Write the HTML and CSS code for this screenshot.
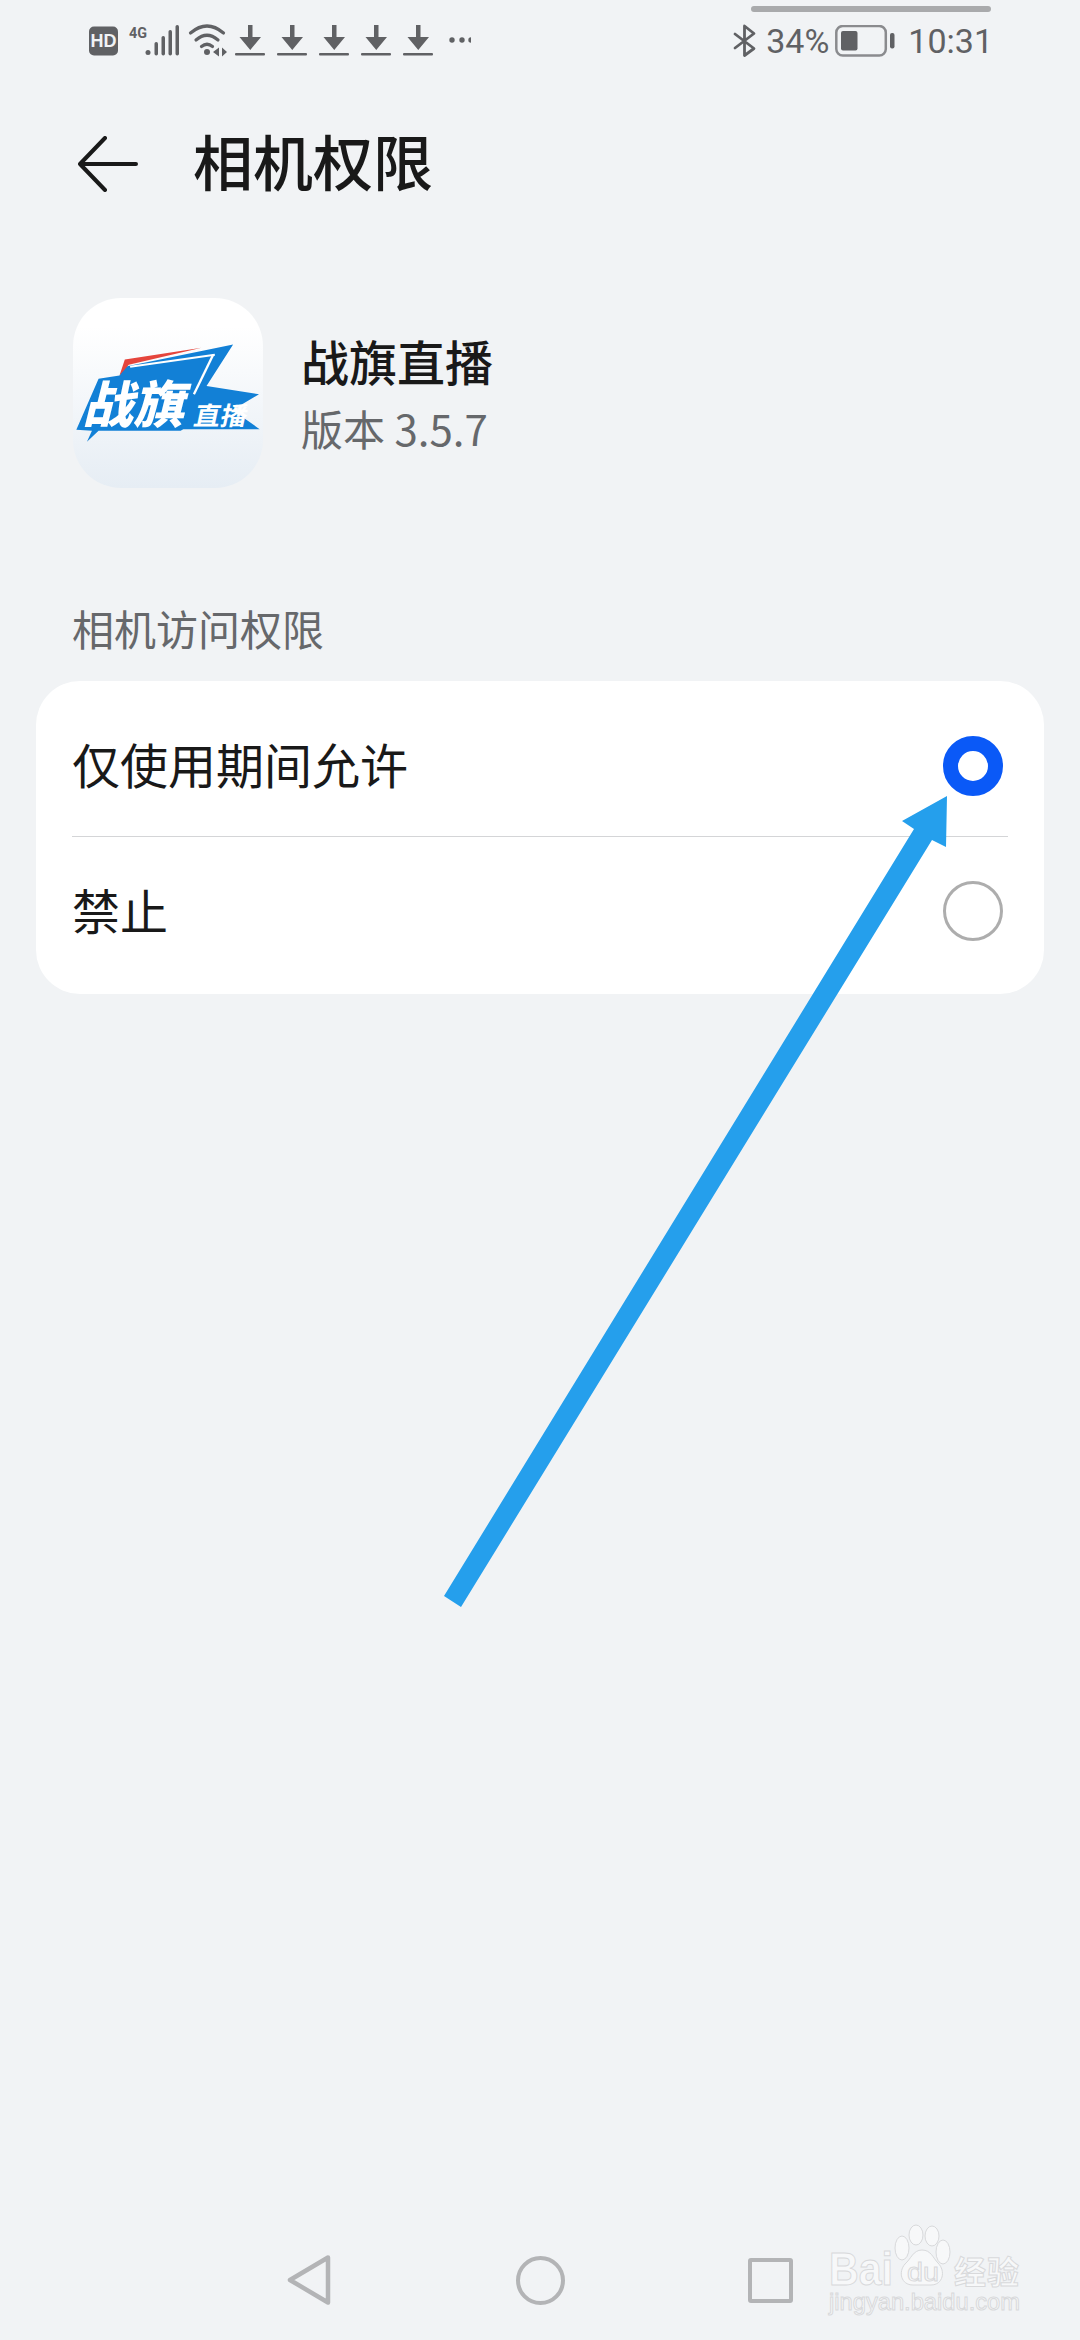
FILE: index.html
```html
<!DOCTYPE html>
<html lang="zh-CN">
<head>
  <meta charset="utf-8" />
  <title>相机权限</title>
  <link rel="stylesheet" href="styles.css">
</head>
<body>
  <div class="page">
    <!-- 状态栏 -->
    <div class="statusbar">
      <svg class="status-left" width="382" height="72" viewBox="89 0 382 72">
        <defs>
          <g id="dl">
            <path d="M248 25h4.500v12h8.500l-10.750 13-10.750-13h8.500z"/>
            <rect x="235" y="53" width="30" height="2.600" rx="1"/>
          </g>
        </defs>
        <g fill="#606164">
          <rect x="89" y="26.500" width="29" height="29" rx="5"/>
          <text class="hd" x="103.500" y="47" text-anchor="middle">HD</text>
          <text class="g4" x="129" y="38" textLength="18" lengthAdjust="spacingAndGlyphs">4G</text>
          <circle cx="148" cy="52.500" r="2.500"/>
          <rect x="154.500" y="42" width="3.500" height="13.500" rx="1.700"/>
          <rect x="161.500" y="36" width="3.500" height="19.500" rx="1.700"/>
          <rect x="168.500" y="30" width="3.500" height="25.500" rx="1.700"/>
          <rect x="175.500" y="25" width="3.500" height="30.500" rx="1.700"/>
          <circle cx="207" cy="52" r="3"/>
          <path d="M213 52l6-4.500v9zM222 47.500l5 4.500-5 4.500z"/>
          <use href="#dl"/>
          <use href="#dl" x="42"/>
          <use href="#dl" x="84"/>
          <use href="#dl" x="126"/>
          <use href="#dl" x="168"/>
          <circle cx="452" cy="40" r="2.700"/>
          <circle cx="462" cy="40" r="2.700"/>
          <circle cx="471" cy="40" r="2.700"/>
        </g>
        <g fill="none" stroke="#606164" stroke-width="3.200" stroke-linecap="round">
          <path d="M190.500 33q16.500-14 33 0"/>
          <path d="M196 40q11-9.500 22 0"/>
          <path d="M201.500 46.500q5.500-4.500 11 0"/>
        </g>
      </svg>
      <div class="status-right">
        <svg width="24" height="34" viewBox="733 24 24 34">
          <path d="M735 34l19 14.500-9.500 7V26l9.500 7.500-19 14.500" fill="none" stroke="#606164" stroke-width="2.800" stroke-linecap="round" stroke-linejoin="round"/>
        </svg>
        <span class="pct">34%</span>
        <svg class="battery" width="60" height="32" viewBox="835 25 60 32">
          <rect x="836.300" y="26" width="49.500" height="29.500" rx="6.500" fill="none" stroke="#8a8b8e" stroke-width="2.500"/>
          <rect x="841" y="31" width="16.500" height="19.500" rx="2" fill="#606164"/>
          <rect x="890" y="33" width="4.500" height="15.500" rx="2" fill="#606164"/>
        </svg>
        <span class="time">10:31</span>
      </div>
    </div>
    <div class="gesture-bar"></div>

    <!-- 标题 -->
    <header class="titlebar">
      <svg class="back" width="60" height="56" viewBox="0 0 60 56">
        <path d="M58 28H2M27 2L2 28l25 26" fill="none" stroke="#191919" stroke-width="4" stroke-linecap="round" stroke-linejoin="round"/>
      </svg>
      <h1>相机权限</h1>
    </header>

    <!-- 应用信息 -->
    <section class="app">
      <div class="app-icon">
        <svg width="190" height="190" viewBox="68 55 572 572">
          <path class="logo-blue" d="M550 195L470 320 628 345 548 392 630 450 400 450 392 455 145 455 110 488 125 455 78 452 145 298 208 288 224 262z"/>
          <path class="logo-red" d="M224 240L455 205 236 256 208 288z"/>
          <path d="M490 226L432 345" fill="none" stroke="#fff" stroke-width="7"/>
          <path d="M240 262L495 226" fill="none" stroke="#fff" stroke-width="6"/>
          <text class="logo-big" transform="translate(96 430) skewX(-14)" textLength="305" lengthAdjust="spacingAndGlyphs">战旗</text>
          <text class="logo-small" transform="translate(428 436) skewX(-12)" textLength="160" lengthAdjust="spacingAndGlyphs">直播</text>
        </svg>
      </div>
      <div class="app-info">
        <div class="app-name">战旗直播</div>
        <div class="app-version">版本 3.5.7</div>
      </div>
    </section>

    <div class="section-label">相机访问权限</div>

    <section class="card">
      <div class="row">
        <span class="row-text">仅使用期间允许</span>
        <span class="radio on"></span>
      </div>
      <div class="row">
        <span class="row-text">禁止</span>
        <span class="radio"></span>
      </div>
    </section>

    <!-- 底部导航 -->
    <nav class="navbar">
      <svg width="46" height="52" viewBox="0 0 46 52">
        <path d="M41 3.500L3 26l38 22.500z" fill="none" stroke="#b3b4b6" stroke-width="4.500" stroke-linejoin="round"/>
      </svg>
      <span class="nav-circle"></span>
      <span class="nav-square"></span>
    </nav>

    <!-- 标注箭头 -->
    <svg class="annotation" width="1080" height="2340" viewBox="0 0 1080 2340">
      <path d="M947 796L902 821 914 829 444 1596 461 1607 932 840 946 847z" fill="#259fec"/>
    </svg>

    <!-- 水印 -->
    <svg class="watermark" width="215" height="112" viewBox="815 2218 215 112">
      <g class="wm">
        <ellipse cx="902" cy="2248" rx="7" ry="12"/>
        <ellipse cx="916" cy="2235" rx="7" ry="10"/>
        <ellipse cx="932" cy="2236" rx="7" ry="10"/>
        <ellipse cx="943" cy="2252" rx="7" ry="12"/>
        <path d="M922 2250c9 0 11 8 16 13 8 8 5 22-7 22h-18c-12 0-15-13-8-21 6-5 8-14 17-14z"/>
        <text class="wm-bai" x="829" y="2285" textLength="64" lengthAdjust="spacingAndGlyphs">Bai</text>
        <text class="wm-du" x="907" y="2281" textLength="32" lengthAdjust="spacingAndGlyphs">du</text>
        <text class="wm-cn" x="954" y="2284" textLength="65">经验</text>
        <text class="wm-url" x="829" y="2310" textLength="191" lengthAdjust="spacingAndGlyphs">jingyan.baidu.com</text>
      </g>
    </svg>
  </div>
</body>
</html>
```

FILE: styles.css
```css
* { box-sizing: border-box; }
body { margin: 0; background: #f1f3f5; font-family: "Noto Sans CJK SC", "Noto Sans", sans-serif; color: #191919; }
.page { position: relative; width: 1080px; height: 2340px; display: flex; flex-direction: column; overflow: hidden; }

.statusbar { height: 72px; padding: 0 87px 0 89px; display: flex; justify-content: space-between; align-items: flex-start; flex-shrink: 0; }
.status-left { display: block; }
.status-right { height: 34px; margin-top: 24px; display: flex; align-items: center; gap: 9px; font-family: Roboto, sans-serif; font-size: 34px; color: #606164; }
.status-right svg { display: block; }
.battery { margin-left: -3px; margin-right: 4px; }
.hd { font: bold 18px "Liberation Sans", sans-serif; fill: #f1f3f5; }
.g4 { font: bold 14px Roboto, sans-serif; }
.gesture-bar { position: absolute; left: 751px; top: 6px; width: 240px; height: 6px; border-radius: 3px; background: #a9aaac; }

.titlebar { height: 96px; margin-top: 44px; padding-left: 78px; display: flex; align-items: center; gap: 55px; }
.back { display: block; flex-shrink: 0; }
.titlebar h1 { margin: 0 0 8px; font-size: 60px; font-weight: 500; line-height: 88px; }

.app { margin-top: 86px; padding-left: 73px; display: flex; align-items: center; gap: 38px; }
.app-icon { width: 190px; height: 190px; border-radius: 48px; background: linear-gradient(#ffffff 15%, #e6edf4 100%); overflow: hidden; }
.app-icon svg { display: block; }
.logo-blue { fill: #1280d6; }
.logo-red { fill: #e5453c; }
.logo-big { font: 900 152px "Noto Sans CJK SC", sans-serif; fill: #fff; }
.logo-small { font: 700 76px "Noto Sans CJK SC", sans-serif; fill: #fff; }
.app-name { font-size: 48px; font-weight: 500; line-height: 64px; }
.app-version { margin-top: 6px; font-size: 42px; line-height: 60px; color: #66686b; }

.section-label { margin-top: 110px; padding-left: 72px; font-size: 42px; line-height: 60px; color: #66686b; }

.card { margin: 23px 36px 0; height: 313px; padding: 0 36px; background: #fff; border-radius: 44px; }
.row { display: flex; justify-content: space-between; align-items: center; font-size: 48px; }
.row:first-child { height: 156px; padding-top: 14px; border-bottom: 1.500px solid #d4d5d7; }
.row:last-child { height: 148px; }
.row-text { margin-bottom: 5px; }
.radio { width: 60px; height: 60px; margin-right: 5px; border-radius: 50%; border: 3px solid #adadad; }
.radio.on { border: 15px solid #0a59f7; }

.navbar { margin-top: auto; height: 120px; flex-shrink: 0; display: flex; justify-content: center; align-items: center; gap: 183px; }
.nav-circle { width: 49px; height: 49px; border-radius: 50%; border: 4.500px solid #b3b4b6; }
.nav-square { width: 45px; height: 45px; border-radius: 3px; border: 4.500px solid #b3b4b6; }

.annotation { position: absolute; left: 0; top: 0; pointer-events: none; }
.watermark { position: absolute; left: 815px; top: 2218px; }
.wm { fill: #f7f8f9; stroke: #d8d9db; stroke-width: 1; }
.wm-bai { font: bold 47px "Liberation Sans", sans-serif; }
.wm-du { font: 26px "Liberation Sans", sans-serif; }
.wm-cn { font: bold 32px "Noto Sans CJK SC", sans-serif; }
.wm-url { font: 24px "Liberation Sans", sans-serif; }
```
